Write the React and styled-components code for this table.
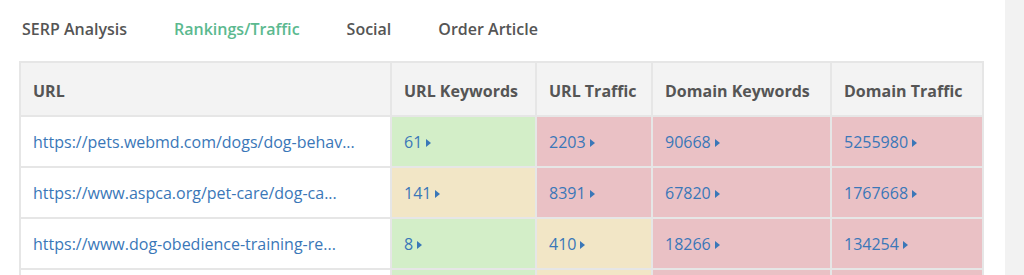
import styled, { createGlobalStyle } from 'styled-components'

const GlobalStyle = createGlobalStyle`
  body {
    margin: 0;
    background: #fff;
    font-family: 'Open Sans', 'Liberation Sans', sans-serif;
  }
`

const Page = styled.div`
  display: flex;
  height: 275px;
  overflow: hidden;
`

const Main = styled.div`
  width: 1005px;
  flex-shrink: 0;
`

const Sidebar = styled.div`
  flex: 1;
  background: #f2f2f2;
`

const Tabs = styled.nav`
  display: flex;
  gap: 47px;
  height: 61px;
  padding: 17px 0 0 22px;
  box-sizing: border-box;
`

const Tab = styled.a`
  font-size: 16px;
  font-weight: 600;
  line-height: 24px;
  color: ${({ $active }) => ($active ? '#5bb98f' : '#555')};
  cursor: pointer;
`

const Table = styled.table`
  margin-left: 19px;
  width: 963px;
  border-collapse: collapse;
  table-layout: fixed;
  border: 2px solid #e6e6e6;
  border-top-color: #e4e7ea;
`

const Th = styled.th`
  height: 54px;
  padding: 3px 12px 0;
  text-align: left;
  font-size: 16px;
  font-weight: 700;
  color: #555;
  background: #f3f3f3;
  border: 2px solid #e6e6e6;
  box-sizing: border-box;
`

const Td = styled.td`
  height: 51px;
  padding: 1px 12px 0;
  font-size: 16px;
  color: #3a77b8;
  white-space: nowrap;
  background: ${({ $tone }) =>
    ({ good: '#d3eec8', mid: '#f2e6c6', bad: '#eac1c5' })[$tone] || '#fff'};
  border: 2px solid #e6e6e6;
  box-sizing: border-box;
`

const Value = styled.span`
  display: inline-flex;
  align-items: center;
  gap: 4px;
`

const Caret = styled.span`
  width: 0;
  height: 0;
  border-top: 4px solid transparent;
  border-bottom: 4px solid transparent;
  border-left: 5px solid #3a77b8;
  margin-top: 1px;
`

const columns = [
  { label: 'URL', width: 371 },
  { label: 'URL Keywords', width: 145 },
  { label: 'URL Traffic', width: 116 },
  { label: 'Domain Keywords', width: 179 },
  { label: 'Domain Traffic', width: 152 },
]

// the last row only peeks in at the bottom edge, so it carries no text
const rows = [
  {
    url: 'https://pets.webmd.com/dogs/dog-behav...',
    cells: [
      [61, 'good'],
      [2203, 'bad'],
      [90668, 'bad'],
      [5255980, 'bad'],
    ],
  },
  {
    url: 'https://www.aspca.org/pet-care/dog-ca...',
    cells: [
      [141, 'mid'],
      [8391, 'bad'],
      [67820, 'bad'],
      [1767668, 'bad'],
    ],
  },
  {
    url: 'https://www.dog-obedience-training-re...',
    cells: [
      [8, 'good'],
      [410, 'mid'],
      [18266, 'bad'],
      [134254, 'bad'],
    ],
  },
  {
    url: '',
    cells: [
      [null, 'good'],
      [null, 'mid'],
      [null, 'bad'],
      [null, 'bad'],
    ],
  },
]

const App = () => {
  return (
    <Page>
      <GlobalStyle />
      <Main>
        <Tabs>
          <Tab>SERP Analysis</Tab>
          <Tab $active>Rankings/Traffic</Tab>
          <Tab>Social</Tab>
          <Tab>Order Article</Tab>
        </Tabs>
        <Table>
          <colgroup>
            {columns.map((col) => (
              <col key={col.label} style={{ width: col.width }} />
            ))}
          </colgroup>
          <thead>
            <tr>
              {columns.map((col) => (
                <Th key={col.label}>{col.label}</Th>
              ))}
            </tr>
          </thead>
          <tbody>
            {rows.map((row, r) => (
              <tr key={r}>
                <Td>{row.url}</Td>
                {row.cells.map(([value, tone], i) => (
                  <Td key={i} $tone={tone}>
                    {value !== null && (
                      <Value>
                        {value}
                        <Caret />
                      </Value>
                    )}
                  </Td>
                ))}
              </tr>
            ))}
          </tbody>
        </Table>
      </Main>
      <Sidebar />
    </Page>
  )
}

export default App
